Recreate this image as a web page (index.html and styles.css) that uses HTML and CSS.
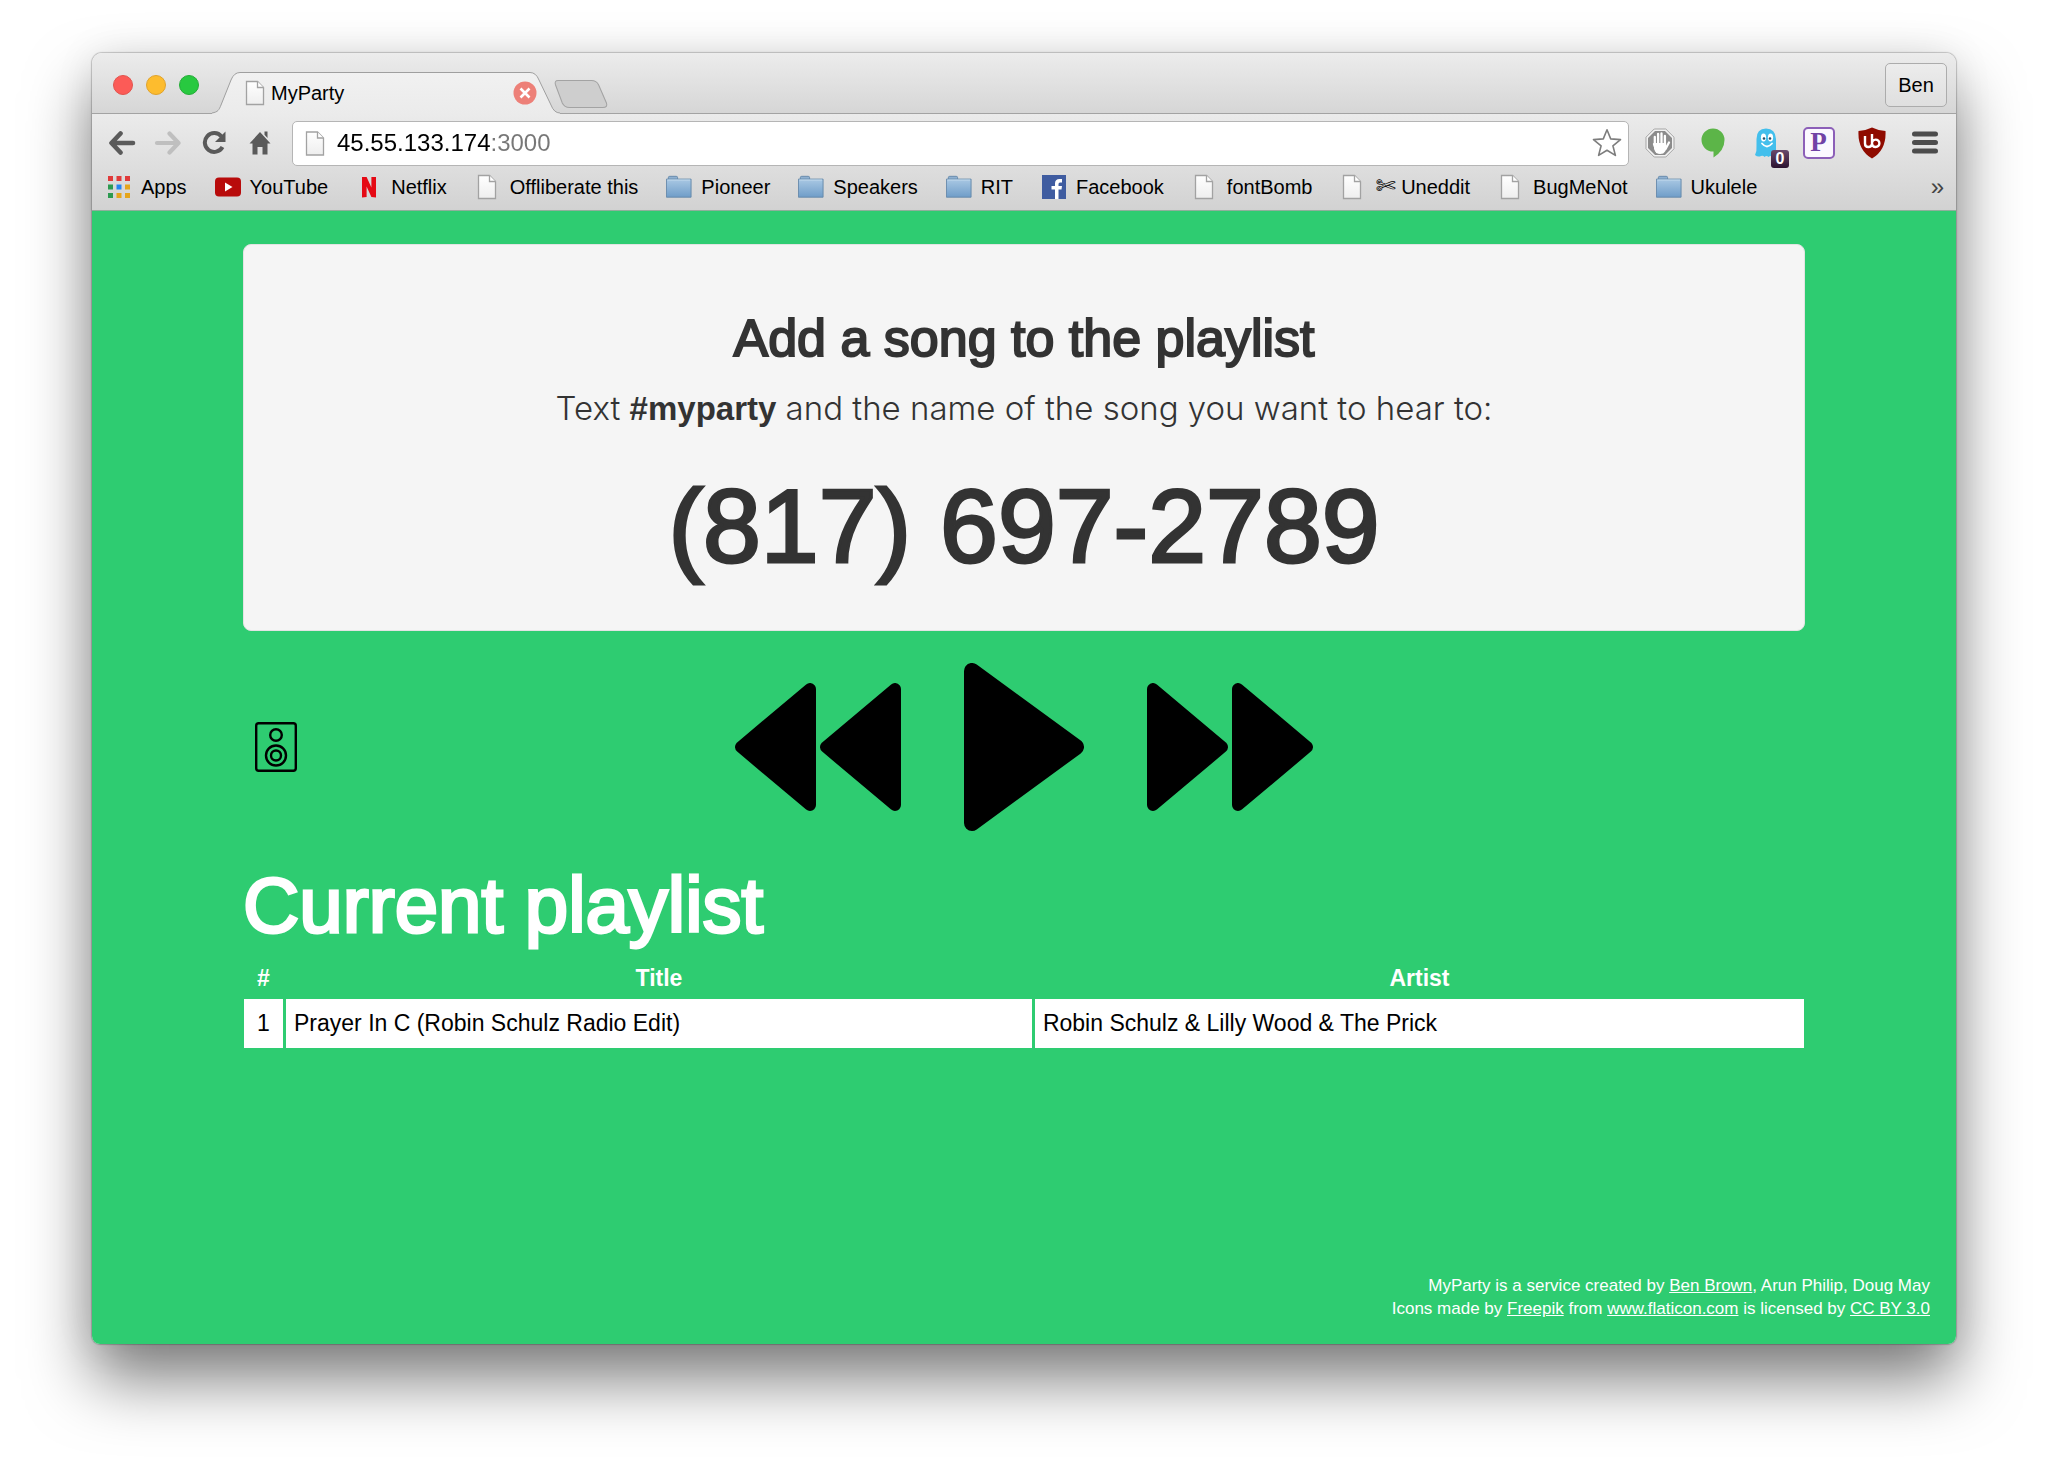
FILE: index.html
```html
<!DOCTYPE html>
<html lang="en">
<head>
  <meta charset="UTF-8">
  <meta name="viewport" content="width=device-width, initial-scale=1.0">
  <title>MyParty</title>
  <link rel="stylesheet" href="styles.css">
</head>
<body>
  <!-- shared icons -->
  <svg class="defs" width="0" height="0" aria-hidden="true">
    <defs>
      <linearGradient id="folderFill" x1="0" y1="0" x2="0" y2="1">
        <stop offset="0" stop-color="#a9c8e4"/>
        <stop offset="1" stop-color="#6f9dc8"/>
      </linearGradient>
      <linearGradient id="pageFill" x1="0" y1="0" x2="0" y2="1">
        <stop offset="0" stop-color="#ffffff"/>
        <stop offset="1" stop-color="#eeeeee"/>
      </linearGradient>
      <linearGradient id="tabFill" x1="0" y1="0" x2="0" y2="1">
        <stop offset="0" stop-color="#f1f1f1"/>
        <stop offset="1" stop-color="#ebebeb"/>
      </linearGradient>
      <symbol id="page" viewBox="0 0 20 26">
        <path d="M1.5 1.5h11l6 6v17h-17z" fill="url(#pageFill)" stroke="#a2a2a2" stroke-width="1.3"/>
        <path d="M12.500 1.500v6h6" fill="#fff" stroke="#a2a2a2" stroke-width="1.3"/>
      </symbol>
      <symbol id="folder" viewBox="0 0 28 26">
        <path d="M2.500 5V3q0-1.500 1.500-1.500h7q1.500 0 1.500 1.500v2" fill="#8fb0d0" stroke="#6588aa"/>
        <path d="M.5 4.500h26.500v19.500H.5z" fill="url(#folderFill)" stroke="#6588aa"/>
        <path d="M1.500 5.500h24.500" stroke="#c6dbee"/>
      </symbol>
    </defs>
  </svg>

  <div class="browser">
    <div class="tabstrip">
      <div class="lights">
        <button class="light red" aria-label="Close"></button>
        <button class="light yellow" aria-label="Minimize"></button>
        <button class="light green" aria-label="Zoom"></button>
      </div>
      <div class="tab">
        <svg class="tab-shape" width="348" height="42" viewBox="0 0 348 42" aria-hidden="true">
          <path d="M0 41C6 40 7 38 9 33L19 8Q22 .5 28 .5H318Q324 .5 327 8L339 33Q342 41 348 41V42H0z" fill="url(#tabFill)"/>
          <path d="M0 41C6 40 7 38 9 33L19 8Q22 .5 28 .5H318Q324 .5 327 8L339 33Q342 41 348 41" fill="none" stroke="#9f9f9f"/>
        </svg>
        <svg class="page-icon" width="20" height="26"><use href="#page"/></svg>
        <span class="tab-title">MyParty</span>
        <button class="tab-close" aria-label="Close tab">
          <svg width="24" height="24" viewBox="0 0 24 24"><circle cx="12" cy="12" r="11.500" fill="#ed8078"/><path d="M7.500 7.500l9 9M16.500 7.500l-9 9" stroke="#fff" stroke-width="2.600"/></svg>
        </button>
      </div>
      <button class="new-tab" aria-label="New tab">
        <svg width="54" height="28" viewBox="0 0 52 28" preserveAspectRatio="none"><path d="M4 .5H36Q41 .5 43 5L50.500 23Q52 27.500 47 27.500H15Q10 27.500 8 23L1.500 5Q0 .5 4 .5z" fill="#cecece" stroke="#a3a3a3"/></svg>
      </button>
      <button class="user">Ben</button>
    </div>

    <div class="toolbar">
      <button class="nav-btn" aria-label="Back">
        <svg width="28" height="24" viewBox="0 0 28 24"><path d="M12.500 2.500L3.500 12l9 9.500M4 12h21" fill="none" stroke="#5a5a5a" stroke-width="4.600" stroke-linecap="round" stroke-linejoin="round"/></svg>
      </button>
      <button class="nav-btn" aria-label="Forward" disabled>
        <svg width="28" height="24" viewBox="0 0 28 24"><path d="M15.500 2.500L24.500 12l-9 9.500M24 12H3" fill="none" stroke="#bfbfbf" stroke-width="4.200" stroke-linecap="round" stroke-linejoin="round"/></svg>
      </button>
      <button class="nav-btn" aria-label="Reload">
        <svg width="24" height="24" viewBox="0 0 24 24"><path d="M19.500 5.500A9.400 9.400 0 1 0 20.500 16" fill="none" stroke="#5a5a5a" stroke-width="4"/><path d="M23.500 .5V11H13z" fill="#5a5a5a"/></svg>
      </button>
      <button class="nav-btn" aria-label="Home">
        <svg width="22" height="24" viewBox="0 0 22 24"><path d="M11 1L21.500 12.500H18.500V23.500H13.500V16H8.500V23.500H3.500V12.500H.5zM15.500 .5h3v6.500l-3-3.300z" fill="#5a5a5a"/></svg>
      </button>
      <div class="omnibox">
        <svg class="page-icon" width="20" height="27" viewBox="0 0 20 26"><use href="#page"/></svg>
        <input class="url" type="text" value="45.55.133.174:3000" aria-label="Address">
        <button class="star" aria-label="Bookmark this page">
          <svg width="30" height="30" viewBox="0 0 30 30"><path d="M15 1.800l3.700 9.100 9.800.7-7.600 6.200 2.500 9.600L15 22.200l-8.400 5.200 2.500-9.600L1.500 11.600l9.800-.7z" fill="#fff" stroke="#7d7d7d" stroke-width="1.600" stroke-linejoin="round"/></svg>
        </button>
      </div>
      <div class="extensions">
        <button class="ext" aria-label="AdBlock">
          <svg width="30" height="30" viewBox="0 0 30 30"><path d="M9.200 1h11.600L29 9.200v11.600L20.800 29H9.200L1 20.800V9.200z" fill="#f2f2f2" stroke="#a5a5a5"/><path d="M10 3h10l7 7v10l-7 7H10l-7-7V10z" fill="#8c8c8c"/><path d="M9.800 17V9M13.100 15V6M16.500 15V5.500M19.900 16V8M9 16l3 8M24 14.500L20.500 21" stroke="#fff" stroke-width="2.300" stroke-linecap="round"/><path d="M8.700 15h12.400v3l2-1-3 6.500q-1.300 2.500-5 2.500-4.500 0-6-5z" fill="#fff"/></svg>
        </button>
        <button class="ext" aria-label="Hangouts">
          <svg width="24" height="30" viewBox="0 0 24 30"><path d="M12 .5A11.500 11.500 0 0 1 23.500 12Q23.500 22.500 12.500 29.500V23.500H12A11.500 11.500 0 0 1 12 .5z" fill="#5cb548"/></svg>
        </button>
        <button class="ext" aria-label="Ghostery">
          <svg width="24" height="30" viewBox="0 0 24 30"><path d="M2.500 11Q2.500 .5 12 .5T22 11v17q-2-1.500-3.500 1-2-2-4 0-2-2-4 0-1.500-2-3.500-1-3 1.500-6-1 2-4 1.500-9z" fill="#43bfec"/><ellipse cx="9.500" cy="9.500" rx="2.600" ry="4" fill="#fff"/><ellipse cx="16.500" cy="9.500" rx="2.600" ry="4" fill="#fff"/><circle cx="10" cy="10.500" r="1.300" fill="#24516a"/><circle cx="16" cy="10.500" r="1.300" fill="#24516a"/><path d="M8 15.500q5 6 10 0" fill="none" stroke="#fff" stroke-width="1.800" stroke-linecap="round"/></svg>
          <span class="badge">0</span>
        </button>
        <button class="ext" aria-label="Pinboard">
          <span class="p-icon">P</span>
        </button>
        <button class="ext" aria-label="uBlock">
          <svg width="28" height="32" viewBox="0 0 28 32"><path d="M14 .5Q20 3.500 27.500 4Q28.500 23 14 31.500Q-.5 23 .5 4Q8 3.500 14 .5z" fill="#8f0b00"/><path d="M7 9v7.500q0 3.500 3.300 3.500t3.700-3V7M14 16.500a3.700 3.700 0 1 1 3.700 3.500Q14 20 14 16.500" fill="none" stroke="#fff" stroke-width="2.400"/></svg>
        </button>
        <button class="ext" aria-label="Menu">
          <svg width="26" height="24" viewBox="0 0 26 24"><path d="M2.500 3h21M2.500 11.500h21M2.500 20h21" stroke="#4c4c4c" stroke-width="5" stroke-linecap="round"/></svg>
        </button>
      </div>
    </div>

    <nav class="bookmarks">
      <a href="#" class="bookmark">
        <svg width="26" height="26" viewBox="0 0 26 26">
          <path d="M2 2h5v5H2zM10.500 2h5v5h-5zM19 2h5v5h-5z" fill="#e03a3a"/>
          <path d="M2 10.500h5v5H2zM2 19h5v5H2z" fill="#2c9a50"/>
          <path d="M10.500 10.500h5v5h-5z" fill="#2684f0"/>
          <path d="M19 10.500h5v5h-5zM10.500 19h5v5h-5zM19 19h5v5h-5z" fill="#e5a51c"/>
        </svg>
        Apps
      </a>
      <a href="#" class="bookmark">
        <svg width="26" height="26" viewBox="0 0 26 26"><rect y="3.500" width="26" height="19" rx="4" fill="#b80b0b"/><path d="M10 8.500l7.500 4.500-7.500 4.500z" fill="#fff"/></svg>
        YouTube
      </a>
      <a href="#" class="bookmark">
        <svg width="26" height="26" viewBox="0 0 26 26"><path d="M6 3h4.600l4.800 10.500V3H20v20.500l-4.600-.5-4.800-10.500V23L6 23.500z" fill="#e50914"/></svg>
        Netflix
      </a>
      <a href="#" class="bookmark"><svg width="26" height="26" viewBox="-2 0 26 26"><use href="#page" width="20" height="26"/></svg>Offliberate this</a>
      <a href="#" class="bookmark"><svg width="26" height="26" viewBox="0 0 28 26"><use href="#folder" width="28" height="26"/></svg>Pioneer</a>
      <a href="#" class="bookmark"><svg width="26" height="26" viewBox="0 0 28 26"><use href="#folder" width="28" height="26"/></svg>Speakers</a>
      <a href="#" class="bookmark"><svg width="26" height="26" viewBox="0 0 28 26"><use href="#folder" width="28" height="26"/></svg>RIT</a>
      <a href="#" class="bookmark">
        <svg width="26" height="26" viewBox="0 0 26 26"><path d="M1 1h24v24H1z" fill="#3f5ca0"/><path d="M14 25v-9.500h-3.500v-3.500H14V9.500Q14 5 18.500 5H21v3.500h-2q-1.500 0-1.500 1.500v2H21l-.5 3.500h-3V25z" fill="#fff"/></svg>
        Facebook
      </a>
      <a href="#" class="bookmark"><svg width="26" height="26" viewBox="-2 0 26 26"><use href="#page" width="20" height="26"/></svg>fontBomb</a>
      <a href="#" class="bookmark"><svg width="26" height="26" viewBox="-2 0 26 26"><use href="#page" width="20" height="26"/></svg><span><b class="scissors">✄</b> Uneddit</span></a>
      <a href="#" class="bookmark"><svg width="26" height="26" viewBox="-2 0 26 26"><use href="#page" width="20" height="26"/></svg>BugMeNot</a>
      <a href="#" class="bookmark"><svg width="26" height="26" viewBox="0 0 28 26"><use href="#folder" width="28" height="26"/></svg>Ukulele</a>
      <button class="more" aria-label="More bookmarks">»</button>
    </nav>

    <div class="content">
      <div class="container">
        <div class="well">
          <h2>Add a song to the playlist</h2>
          <p class="lead">Text <strong>#myparty</strong> and the name of the song you want to hear to:</p>
          <h1 class="phone">(817) 697-2789</h1>
        </div>

        <div class="controls">
          <button class="speaker" aria-label="Speaker">
            <svg width="42" height="50" viewBox="0 0 42 50" fill="none" stroke="#000" stroke-width="2.400">
              <rect x="1.200" y="1.200" width="39.600" height="47.600" rx="2.500"/>
              <circle cx="21" cy="13" r="5.800"/>
              <circle cx="21" cy="33.500" r="10"/>
              <circle cx="21" cy="33.500" r="5"/>
            </svg>
          </button>
          <div class="player">
            <button aria-label="Previous">
              <svg width="166" height="128" viewBox="0 0 166 128" stroke="#000" stroke-width="12" stroke-linejoin="round"><path d="M75 6v116L6 64zM160 6v116L91 64z"/></svg>
            </button>
            <button aria-label="Play">
              <svg width="120" height="168" viewBox="0 0 120 168" stroke="#000" stroke-width="16" stroke-linejoin="round"><path d="M8 8v152L112 84z"/></svg>
            </button>
            <button aria-label="Next">
              <svg width="166" height="128" viewBox="0 0 166 128" stroke="#000" stroke-width="12" stroke-linejoin="round"><path d="M6 6v116L75 64zM91 6v116L160 64z"/></svg>
            </button>
          </div>
        </div>

        <h1 class="list-title">Current playlist</h1>
        <table class="playlist">
          <thead>
            <tr><th class="num">#</th><th class="title">Title</th><th>Artist</th></tr>
          </thead>
          <tbody>
            <tr><td class="num">1</td><td>Prayer In C (Robin Schulz Radio Edit)</td><td>Robin Schulz &amp; Lilly Wood &amp; The Prick</td></tr>
          </tbody>
        </table>
      </div>

      <footer>
        MyParty is a service created by <a href="#">Ben Brown</a>, Arun Philip, Doug May<br>
        Icons made by <a href="#">Freepik</a> from <a href="#">www.flaticon.com</a> is licensed by <a href="#">CC BY 3.0</a>
      </footer>
    </div>
  </div>
</body>
</html>
```

FILE: styles.css
```css
* {
  box-sizing: border-box;
}

body {
  margin: 0;
  min-height: 100vh;
  padding: 53px 92px 133px;
  display: flex;
  background: #fff;
  font-family: "Liberation Sans", Arial, "DejaVu Sans", sans-serif;
  font-size: 20px;
  color: #000;
}

button {
  display: flex;
  align-items: center;
  justify-content: center;
  padding: 0;
  border: none;
  background: none;
  font-family: inherit;
  font-size: 20px;
  color: inherit;
  cursor: pointer;
}

svg {
  display: block;
  flex: none;
}

.defs {
  position: absolute;
}

/* window */
.browser {
  flex: 1;
  display: flex;
  flex-direction: column;
  min-width: 0;
  border-radius: 10px 10px 8px 8px;
  box-shadow: 0 0 1px 1px rgba(0, 0, 0, 0.2), 0 36px 64px rgba(0, 0, 0, 0.5), 0 0 40px rgba(0, 0, 0, 0.08);
}

.tabstrip {
  display: flex;
  align-items: flex-end;
  height: 61px;
  padding: 0 9px 0 21px;
  border-bottom: 1px solid #a3a3a3;
  border-radius: 10px 10px 0 0;
  background: linear-gradient(#ececec, #d6d6d6);
}

.lights {
  display: flex;
  gap: 13px;
  padding-bottom: 18px;
  margin-right: 13px;
}

.light {
  width: 20px;
  height: 20px;
  border-radius: 50%;
}

.red {
  background: #fc5b57;
  border: 1px solid #e2534d;
}

.yellow {
  background: #fdbc2e;
  border: 1px solid #e0a32c;
}

.green {
  background: #28c940;
  border: 1px solid #24ac37;
}

.tab {
  position: relative;
  display: flex;
  align-items: center;
  width: 348px;
  height: 42px;
  margin-bottom: -1px;
  padding: 0 23px 0 33px;
}

.tab-shape {
  position: absolute;
  left: 0;
  top: 0;
}

.page-icon,
.tab-title,
.tab-close {
  position: relative;
}

.tab-title {
  flex: 1;
  margin-left: 6px;
}

.new-tab {
  margin: 0 auto 5px -6px;
}

.user {
  width: 62px;
  height: 44px;
  margin-bottom: 6px;
  border: 1px solid #acacac;
  border-radius: 5px;
  background: linear-gradient(#ececec, #dfdfdf);
}

.toolbar {
  display: flex;
  align-items: center;
  height: 56px;
  padding: 2px 5px 0 16px;
  background: linear-gradient(#ebebeb, #dddddd);
}

.nav-btn {
  width: 28px;
  margin-right: 18px;
}

.omnibox {
  flex: 1;
  display: flex;
  align-items: center;
  height: 45px;
  padding: 0 6px 0 12px;
  border: 1px solid #b5b5b5;
  border-radius: 5px;
  background: #fff;
}

.url {
  flex: 1;
  min-width: 0;
  margin-left: 12px;
  padding: 0;
  border: none;
  outline: none;
  /* host in black, port in grey */
  background: linear-gradient(to right, #000 153px, #777 153px);
  -webkit-background-clip: text;
  background-clip: text;
  color: transparent;
  font-family: inherit;
  font-size: 24px;
  line-height: 32px;
}

.extensions {
  display: flex;
  margin-left: 4px;
}

.ext {
  position: relative;
  width: 53px;
  height: 40px;
}

.badge {
  position: absolute;
  right: 3px;
  bottom: -5px;
  width: 18px;
  border-radius: 3px;
  background: linear-gradient(#6a4a6c, #2b1230);
  color: #fff;
  font-size: 16px;
  font-weight: bold;
  line-height: 18px;
}

.p-icon {
  width: 32px;
  height: 32px;
  border: 2px solid #8c5fb8;
  border-radius: 5px;
  background: #fbf8ff;
  color: #7142a6;
  font-family: "Liberation Serif", serif;
  font-size: 27px;
  font-weight: bold;
  line-height: 26px;
}

.bookmarks {
  display: flex;
  align-items: center;
  gap: 28px;
  height: 40px;
  padding: 0 12px 6px 14px;
  background: linear-gradient(#dddddd, #d2d2d2);
}

.bookmark {
  display: flex;
  align-items: center;
  gap: 9px;
  color: #000;
  text-decoration: none;
  white-space: nowrap;
}

.scissors {
  font-size: 24px;
  line-height: 20px;
}

.more {
  margin-left: auto;
  color: #444;
  font-size: 24px;
}

/* page */
.content {
  flex: 1;
  display: flex;
  flex-direction: column;
  padding: 33px 26px 24px;
  border-top: 1px solid #8fae9c;
  border-radius: 0 0 8px 8px;
  background: #2ecc71;
}

.container {
  width: 1562px;
  max-width: 100%;
  margin: 0 auto;
}

.well {
  padding: 58px 20px 44px;
  border: 1px solid #e3e3e3;
  border-radius: 8px;
  background: #f5f5f5;
  color: #333;
  text-align: center;
}

h1,
h2,
p {
  margin: 0;
}

h2 {
  font-size: 52px;
  font-weight: normal;
  line-height: 70px;
  -webkit-text-stroke: 2px #333;
}

.lead {
  font-family: Inter, "Liberation Sans", sans-serif;
  font-size: 33px;
  font-weight: 300;
  line-height: 70px;
}

.lead strong {
  font-family: "Liberation Sans", Arial, sans-serif;
  font-weight: bold;
}

.phone {
  margin-top: 22px;
  font-size: 104px;
  font-weight: normal;
  line-height: 120px;
  -webkit-text-stroke: 3px #333;
}

.controls {
  display: grid;
  grid-template-columns: 1fr auto 1fr;
  align-items: center;
  padding: 32px 12px;
}

.speaker {
  justify-self: start;
}

.player {
  display: flex;
  align-items: center;
  gap: 63px;
}

.list-title {
  color: #fff;
  font-size: 78px;
  font-weight: normal;
  line-height: 84px;
  -webkit-text-stroke: 3px #fff;
}

.playlist {
  width: calc(100% + 4px);
  margin: 10px -2px 0;
  border-spacing: 3px;
  font-size: 23px;
}

.playlist th {
  padding: 0;
  color: #fff;
  line-height: 36px;
}

.playlist td {
  padding: 0 8px;
  background: #fff;
  line-height: 49px;
}

.playlist .num {
  width: 39px;
  text-align: center;
}

.playlist .title {
  width: 48%;
}

footer {
  margin-top: auto;
  color: #fff;
  font-size: 17px;
  line-height: 23px;
  text-align: right;
}

footer a {
  color: #fff;
}
```
